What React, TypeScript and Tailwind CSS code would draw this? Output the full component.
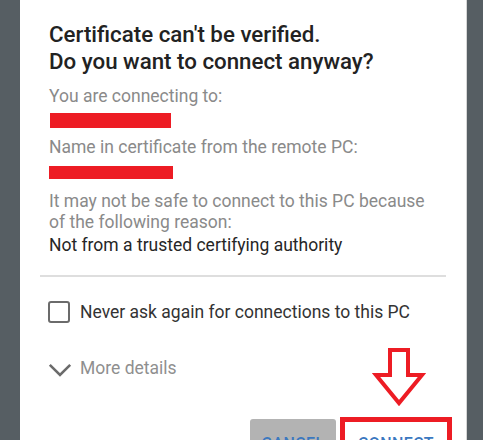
export default function App() {
  return (
    <div
      className="relative h-[440px] w-[483px] overflow-hidden bg-[#565e63] pl-[20px] pr-[16px]"
      style={{ fontFamily: "Roboto, 'Noto Sans', sans-serif" }}
    >
      <div className="flex h-full flex-col border-r border-[#d6d6d6] bg-white">
        {/* Message area */}
        <div className="px-[29px] pt-[21px]">
          <h1 className="text-[22.3px] font-medium leading-[27px] text-[#222222]">
            Certificate can't be verified.
            <br />
            Do you want to connect anyway?
          </h1>

          <p className="mt-[11px] text-[17.5px] leading-[20px] text-[#8a8a8a]">You are connecting to:</p>
          <div className="mt-[7px] ml-[1px] h-[15px] w-[121px] bg-[#ed1c24]" />

          <p className="mt-[9px] text-[17.5px] leading-[20px] text-[#8a8a8a]">
            Name in certificate from the remote PC:
          </p>
          <div className="mt-[9px] h-[13px] w-[124px] bg-[#ed1c24]" />

          <p className="mt-[12px] text-[17.5px] leading-[20.5px] text-[#8a8a8a]">
            It may not be safe to connect to this PC because of the following reason:
          </p>
          <p className="mt-[3px] text-[17.5px] leading-[20px] text-[#262626]">
            Not from a trusted certifying authority
          </p>
        </div>

        <div className="mx-[20px] mt-[20px] h-[2px] shrink-0 bg-[#dedede]" />

        {/* Options */}
        <div className="px-[28px] pt-[24px]">
          <label className="flex items-center gap-[10px]">
            <span className="h-[22px] w-[22px] rounded-[3px] border-2 border-[#6b6b6b]" />
            <span className="text-[17.5px] leading-[22px] text-[#333333]">
              Never ask again for connections to this PC
            </span>
          </label>

          <div className="mt-[34px] flex items-center gap-[8px]">
            <svg width="24" height="14" viewBox="0 0 24 14" className="mt-[3px]">
              <polyline
                points="1.8,1.8 12,12 22.2,1.8"
                fill="none"
                stroke="#6b6b6b"
                strokeWidth="2.6"
              />
            </svg>
            <span className="text-[17.5px] leading-[22px] text-[#8f8f8f]">More details</span>
          </div>
        </div>

        {/* Buttons */}
        <div className="mt-[40px] flex shrink-0 items-start justify-end gap-[4px] pr-[14px]">
          <div className="h-[40px] w-[86px] rounded-t-[3px] bg-[#b3b3b3] pt-[17px] text-center text-[16px] leading-[16px] font-medium tracking-wide text-[#3b78c0]">
            CANCEL
          </div>
          <div className="-mt-[2px] h-[42px] w-[112px] border-[5px] border-[#ed1c24] bg-white pt-[14px] text-center text-[16px] leading-[16px] font-medium tracking-wide text-[#3b78c0]">
            CONNECT
          </div>
        </div>
      </div>

      {/* Annotation arrow */}
      <svg className="absolute left-[372px] top-[346px]" width="54" height="64" viewBox="0 0 54 64">
        <polygon
          points="18,4 36,4 36,29 50,29 27,57 4,29 18,29"
          fill="none"
          stroke="#ed1c24"
          strokeWidth="4"
          strokeLinejoin="miter"
        />
      </svg>
    </div>
  );
}
